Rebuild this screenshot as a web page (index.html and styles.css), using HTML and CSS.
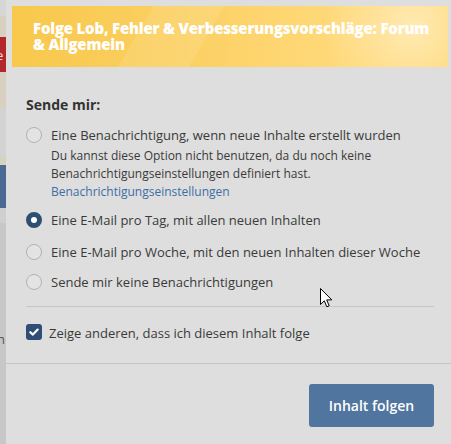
FILE: index.html
```html
<!DOCTYPE html>
<html lang="de">
<head>
<meta charset="utf-8">
<title>Folgen</title>
<link rel="stylesheet" href="styles.css">
</head>
<body>
<div class="page">
  <div class="backdrop">
    <div class="bd bd-grey1"></div>
    <div class="bd bd-beige1"></div>
    <div class="bd bd-red"><span class="bd-letter">e</span></div>
    <div class="bd bd-beige2"></div>
    <div class="bd bd-grey2"></div>
    <div class="bd bd-beige3"></div>
    <div class="bd bd-blue"></div>
    <div class="bd bd-grey3"></div>
    <div class="bd bd-grey4"><span class="bd-letter dark">h</span></div>
  </div>
  <div class="modal">
    <div class="modal-head">
      <h1 class="modal-title">Folge Lob, Fehler &amp; Verbesserungsvorschläge: Forum &amp; Allgemein</h1>
    </div>
    <div class="modal-body">
      <div class="label">Sende mir:</div>
      <div class="option first">
        <span class="radio"></span>
        <div class="option-text">
          <div>Eine Benachrichtigung, wenn neue Inhalte erstellt wurden</div>
          <div class="hint">Du kannst diese Option nicht benutzen, da du noch keine Benachrichtigungseinstellungen definiert hast.<br><a class="link" href="#">Benachrichtigungseinstellungen</a></div>
        </div>
      </div>
      <div class="option">
        <span class="radio checked"></span>
        <div class="option-text">Eine E-Mail pro Tag, mit allen neuen Inhalten</div>
      </div>
      <div class="option third">
        <span class="radio"></span>
        <div class="option-text">Eine E-Mail pro Woche, mit den neuen Inhalten dieser Woche</div>
      </div>
      <div class="option last">
        <span class="radio"></span>
        <div class="option-text">Sende mir keine Benachrichtigungen</div>
      </div>
      <div class="sep"></div>
      <div class="option check-row">
        <span class="checkbox"><svg viewBox="0 0 16 16" width="16" height="16"><path d="M4.3 8.2 L6.9 10.6 L11.7 5.6" fill="none" stroke="#fff" stroke-width="2.2" stroke-linecap="round" stroke-linejoin="round"/></svg></span>
        <div class="option-text">Zeige anderen, dass ich diesem Inhalt folge</div>
      </div>
    </div>
    <div class="modal-foot">
      <button class="btn" type="button">Inhalt folgen</button>
    </div>
  </div>
  <svg class="cursor" width="13" height="21" viewBox="0 0 13 21"><path d="M0.5 0.5 L0.5 16.5 L4.3 12.8 L6.8 18.8 L9.2 17.8 L6.7 11.9 L11.8 11.9 Z" fill="#fff" stroke="#000" stroke-width="1" stroke-linejoin="miter"/></svg>
</div>
</body>
</html>
```

FILE: styles.css
```css
* { box-sizing: border-box; }
html, body {
  margin: 0;
  padding: 0;
  width: 451px;
  height: 444px;
  overflow: hidden;
  background: #c8c8c8;
  font-family: "Open Sans", "Noto Sans", sans-serif;
}
.page {
  position: relative;
  display: flex;
  width: 451px;
  height: 444px;
}
.backdrop {
  width: 6px;
  flex: none;
  display: flex;
  flex-direction: column;
  overflow: hidden;
}
.bd { flex: none; position: relative; }
.bd-grey1 { height: 16px; background: #d7d7d7; }
.bd-beige1 { height: 21px; background: #d8d1bf; }
.bd-red { height: 35px; background: #b3282c; }
.bd-beige2 { height: 36px; background: #d8d1bf; }
.bd-grey2 { height: 49px; background: #d3d3d3; }
.bd-beige3 { height: 8px; background: #d8d1bf; }
.bd-blue { height: 43px; background: #4a6a93; }
.bd-grey3 { height: 15px; background: #cfcfcf; }
.bd-grey4 { flex: 1; height: 221px; background: #c7c7c7; }
.bd-letter {
  position: absolute;
  left: -4px;
  top: 10px;
  font-size: 13px;
  line-height: 16px;
  color: #f3dede;
}
.bd-letter.dark { top: 108px; left: -3px; color: #555; }

.modal {
  flex: none;
  width: 448px;
  background: #dedede;
  box-shadow: -1px 0 3px rgba(0,0,0,0.25);
  display: flex;
  flex-direction: column;
}
.modal-head {
  margin: 6px 6px 0 6px;
  height: 61px;
  padding: 14px 12px 0 21px;
  background:
    radial-gradient(circle at 92% 35%, rgba(255,240,200,0.75) 0, rgba(255,240,200,0) 22%),
    linear-gradient(120deg, rgba(255,255,255,0) 0 30%, rgba(255,255,255,0.10) 30% 45%, rgba(255,255,255,0) 45%),
    linear-gradient(90deg, #f8c84c 0%, #fcd166 45%, #ffd97a 75%, #ffd771 100%);
}
.modal-title {
  margin: 0;
  color: #fff;
  font-size: 15px;
  line-height: 16px;
  font-weight: 800;
  letter-spacing: -0.2px;
}
.modal-body {
  padding: 28px 20px 0 20px;
  color: #3a3a3a;
}
.label {
  font-size: 14px;
  font-weight: 700;
  line-height: 20px;
  color: #333;
  margin-bottom: 11px;
}
.option {
  display: flex;
  align-items: flex-start;
  gap: 9px;
  font-size: 13px;
  line-height: 18px;
  margin-bottom: 14px;
}
.option.first { margin-bottom: 10px; }
.option.third { margin-bottom: 12px; }
.option.last { margin-bottom: 15px; }
.radio {
  flex: none;
  width: 16px;
  height: 16px;
  margin-top: 1px;
  border-radius: 50%;
  border: 1px solid #b2b2b2;
  background: #e3e3e3;
}
.radio.checked {
  border: 5px solid #2e4e72;
  background: #fff;
}
.hint {
  font-size: 12px;
  line-height: 18px;
  margin-top: 3px;
}
.link {
  color: #3d6ea6;
  text-decoration: none;
}
.sep {
  height: 1px;
  background: #c6c6c6;
  margin: 1px 0 17px 0;
}
.check-row { gap: 7px; margin-bottom: 0; }
.checkbox {
  flex: none;
  width: 16px;
  height: 16px;
  border-radius: 3px;
  background: #2f4e74;
  display: flex;
}
.modal-foot {
  margin-top: 21px;
  border-top: 1px solid #c4c4c4;
  padding: 20px 20px 0 20px;
  display: flex;
  justify-content: flex-end;
}
.btn {
  width: 125px;
  height: 43px;
  border: 0;
  border-radius: 3px;
  background: #50769f;
  color: #fff;
  font-family: "Open Sans", "Noto Sans", sans-serif;
  font-size: 14px;
  font-weight: 600;
}
.cursor {
  position: absolute;
  left: 320px;
  top: 288px;
}
```
